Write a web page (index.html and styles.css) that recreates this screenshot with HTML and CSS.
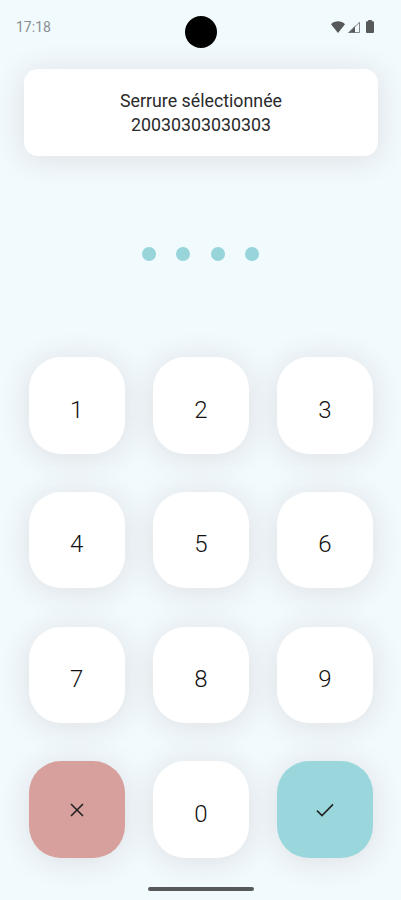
FILE: index.html
```html
<!DOCTYPE html>
<html lang="fr">
<head>
	<title>Serrure</title>
	<meta charset="UTF-8">
	<link rel="stylesheet" href="styles.css">
</head>
<body>
	<div class="statusbar">
		<span class="time">17:18</span>
		<div class="camera"></div>
		<div class="status_icons">
			<svg class="wifi" width="14" height="12" viewBox="0 0 14 12"><path d="M0 3.2C4 -.6 10 -.6 14 3.2L7 12z"/></svg>
			<svg class="signal" width="12" height="12" viewBox="0 0 12 12"><path d="M0 12L7 5v7z"/><path class="signal_line" d="M1.2 11.5L11.5 1.2v10.3z"/></svg>
			<svg class="battery" width="8" height="13" viewBox="0 0 8 13"><path d="M2.2 0h3.6v1.2H7a1 1 0 0 1 1 1V12a1 1 0 0 1-1 1H1a1 1 0 0 1-1-1V2.2a1 1 0 0 1 1-1h1.2z"/></svg>
		</div>
	</div>
	<div class="lock_box">
		<div>Serrure sélectionnée</div>
		<div class="lock_id">20030303030303</div>
	</div>
	<div class="dots">
		<span class="dot"></span>
		<span class="dot"></span>
		<span class="dot"></span>
		<span class="dot"></span>
	</div>
	<div class="keypad">
		<button type="button" class="key">1</button>
		<button type="button" class="key">2</button>
		<button type="button" class="key">3</button>
		<button type="button" class="key">4</button>
		<button type="button" class="key">5</button>
		<button type="button" class="key">6</button>
		<button type="button" class="key">7</button>
		<button type="button" class="key">8</button>
		<button type="button" class="key">9</button>
		<button type="button" class="key key_cancel" aria-label="Annuler">
			<svg class="key_icon" width="14" height="14" viewBox="0 0 14 14"><path d="M1 1l12 12M13 1L1 13"/></svg>
		</button>
		<button type="button" class="key">0</button>
		<button type="button" class="key key_ok" aria-label="Valider">
			<svg class="key_icon" width="18" height="14" viewBox="0 0 18 14"><path d="M1 7.6l5 5L17 1.4"/></svg>
		</button>
	</div>
	<div class="homebar"></div>
</body>
</html>
```
FILE: styles.css
```css
*{
	margin: 0;
	padding: 0;
	box-sizing: border-box;
}
body{
	width: 401px;
	height: 900px;
	overflow: hidden;
	background-color: #f1fafd;
	font-family: Roboto, "Liberation Sans", sans-serif;
	color: #2a2a2a;
}
.statusbar{
	height: 69px;
	padding: 16px 27px 0 16px;
	display: grid;
	grid-template-columns: 1fr 32px 1fr;
	align-items: start;
}
.time{
	margin-top: 3px;
	font-size: 14px;
	line-height: 16px;
	color: #8a8e91;
}
.camera{
	width: 32px;
	height: 32px;
	margin-left: 5.5px;
	border-radius: 50%;
	background-color: black;
}
.status_icons{
	display: flex;
	justify-content: flex-end;
	align-items: center;
	height: 13px;
	margin-top: 4px;
	fill: #56585a;
}
.signal{
	margin-left: 3px;
	margin-right: 6px;
}
.signal_line{
	fill: none;
	stroke: #75787a;
	stroke-width: .9;
}
.lock_box{
	width: 354px;
	height: 87px;
	margin-left: 24px;
	padding-top: 20px;
	border-radius: 14px;
	background-color: white;
	box-shadow: 0 3px 30px rgba(110, 50, 60, .14);
	text-align: center;
	font-size: 17.8px;
	line-height: 24px;
}
.dots{
	display: flex;
	justify-content: center;
	gap: 20.5px;
	margin-top: 91px;
}
.dot{
	width: 14px;
	height: 14px;
	border-radius: 50%;
	background-color: #97d5da;
}
.keypad{
	display: grid;
	grid-template-columns: repeat(3, 96.5px);
	grid-auto-rows: 96.5px;
	column-gap: 27.6px;
	row-gap: 38.2px;
	margin-top: 96.3px;
	margin-left: 28.5px;
}
.key{
	display: flex;
	justify-content: center;
	align-items: center;
	padding-top: 8px;
	border: none;
	border-radius: 32px;
	background-color: white;
	box-shadow: 0 3px 30px rgba(110, 50, 60, .14);
	font-family: inherit;
	font-size: 24px;
	font-weight: 300;
	color: #111;
	cursor: pointer;
}
.key_cancel{
	padding-top: 0;
	background-color: #d7a09d;
}
.key_ok{
	padding-top: 0;
	background-color: #9ad7dd;
}
.key_icon{
	fill: none;
	stroke: #222;
	stroke-width: 1.6;
}
.homebar{
	width: 106px;
	height: 4px;
	margin: 29px auto 0;
	border-radius: 2px;
	background-color: #58595b;
}
```
